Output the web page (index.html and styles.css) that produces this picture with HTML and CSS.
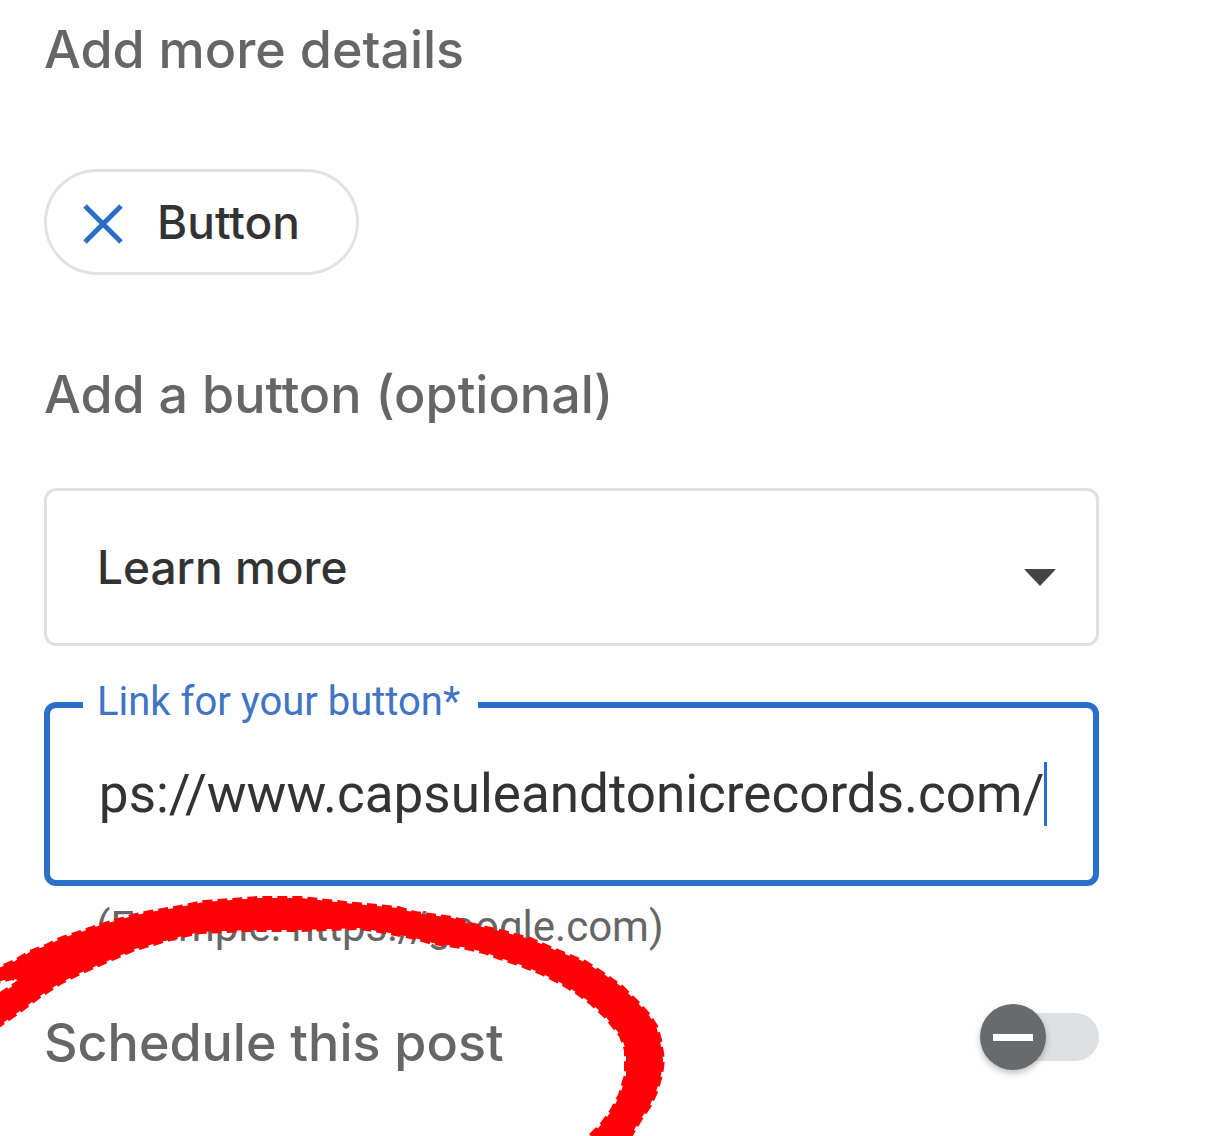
FILE: index.html
```html
<!DOCTYPE html>
<html lang="en">
<head>
    <meta charset="UTF-8">
    <meta name="viewport" content="width=device-width, initial-scale=1.0">
    <title>Add more details</title>
    <link rel="stylesheet" href="styles.css">
</head>
<body>
    <form class="post-form">
        <h2>Add more details</h2>
        <button type="button" class="chip">
            <svg class="chip-icon" viewBox="0 0 40 44" aria-hidden="true">
                <path d="M2 6L38 42M38 6L2 42"/>
            </svg>
            Button
        </button>

        <h2><label for="action">Add a button (optional)</label></h2>
        <div class="select-box">
            <select id="action">
                <option>Learn more</option>
            </select>
            <svg class="arrow" viewBox="0 0 32 17" aria-hidden="true">
                <path d="M0 0H32L16 17Z"/>
            </svg>
        </div>

        <fieldset class="link-field">
            <legend><label for="link">Link for your button*</label></legend>
            <div class="link-input">
                <input type="text" id="link" value="https://www.capsuleandtonicrecords.com/" required>
                <span class="caret"></span>
            </div>
        </fieldset>
        <p class="hint">(Example: https://google.com)</p>

        <div class="schedule">
            <h2><label for="schedule">Schedule this post</label></h2>
            <input type="checkbox" role="switch" id="schedule" class="switch">
            <svg class="marker" viewBox="0 895 670 241" aria-hidden="true">
                <path d="M-10 972L15 961L30 952L48 945L62 938L78 933L98 926L115 921L132 916L150 912L180 907L204 902L258 898L301 898L345 903L398 908L415 913L453 918L470 924L500 931L530 939L555 950L585 962L605 975L622 987L637 1002L648 1014L656 1026L660 1040L663 1060L661 1075L656 1092L650 1105L640 1120L628 1140L586 1140L602 1124L612 1110L620 1095L626 1075L626 1050L621 1036L606 1017L591 1003L576 992L561 983L541 973L521 965L500 958L484 952L462 947L433 943L411 937L385 932L360 928L300 930L250 930L200 932L170 939L150 945L135 949L110 960L80 973L60 983L40 996L20 1011L-10 1032L-10 1000L2 993L20 981L12 978L-10 984Z"/>
            </svg>
        </div>
    </form>

    <script>
        // keep the end of the address in view
        const link = document.getElementById('link');
        link.scrollLeft = link.scrollWidth;
    </script>
</body>
</html>
```
FILE: styles.css
```css
* {
    box-sizing: border-box;
}
body {
    margin: 0;
    background-color: #fefefe;
    font-family: Roboto, Arial, sans-serif;
    color: #333;
}
.post-form {
    padding: 20px 106px 0 44px;
    min-height: 100vh;
    overflow: hidden;
}
h2 {
    margin: 0;
    font-family: Inter, sans-serif;
    font-size: 52px;
    line-height: 60px;
    font-weight: 500;
    color: #666;
}
.chip {
    display: flex;
    align-items: center;
    gap: 34px;
    height: 106px;
    margin: 89px 0 90px;
    padding: 0 56px 0 36px;
    border: 3px solid #e2e2e2;
    border-radius: 53px;
    background: #fff;
    font-family: Inter, sans-serif;
    font-size: 46px;
    font-weight: 500;
    color: #333;
    cursor: pointer;
}
.chip-icon {
    width: 40px;
    height: 44px;
    fill: none;
    stroke: #2a6fc4;
    stroke-width: 5;
}
.select-box {
    position: relative;
    margin: 63px 0 36px;
}
.select-box select {
    display: block;
    width: 100%;
    height: 158px;
    padding: 0 100px 0 50px;
    border: 3px solid #e0e0e0;
    border-radius: 12px;
    background: #fff;
    appearance: none;
    font-family: Inter, sans-serif;
    font-size: 46px;
    font-weight: 500;
    color: #333;
}
.arrow {
    position: absolute;
    right: 43px;
    top: 81px;
    width: 32px;
    height: 17px;
    fill: #444;
    pointer-events: none;
}
.link-field {
    min-width: 0;
    margin: 0;
    padding: 0 46px 54px 33px;
    border: 6px solid #2a6fc9;
    border-radius: 12px;
}
.link-field legend {
    padding: 0 18px 6px 14px;
    font-size: 40px;
    line-height: 40px;
    color: #3f75c4;
}
.link-input {
    display: flex;
    align-items: center;
    padding: 34px 0 0 17px;
}
.link-input input {
    flex: 1;
    min-width: 0;
    height: 64px;
    padding: 0;
    border: 0;
    outline: 0;
    background: transparent;
    font-family: Roboto, Arial, sans-serif;
    font-size: 53px;
    color: #333;
}
.caret {
    width: 3px;
    height: 64px;
    background: #2a6fc9;
}
.hint {
    margin: 17px 0 0 52px;
    font-size: 42px;
    line-height: 48px;
    color: #666;
}
.schedule {
    position: relative;
    display: flex;
    align-items: flex-start;
    justify-content: space-between;
    margin-top: 62px;
}
.switch {
    appearance: none;
    display: flex;
    align-items: center;
    width: 119px;
    height: 48px;
    margin: 0;
    border-radius: 24px;
    background: linear-gradient(90deg, transparent 33px, #dfe0e2 33px);
    cursor: pointer;
}
.switch::before {
    content: "";
    width: 66px;
    height: 66px;
    border-radius: 50%;
    background: linear-gradient(#fff, #fff) center / 40px 7px no-repeat #686a6b;
    box-shadow: 0 3px 6px rgba(0,0,0,0.25);
}
.switch:checked::before {
    margin-left: auto;
    background-color: #2a6fc9;
}
.marker {
    position: absolute;
    left: -44px;
    top: -118px;
    width: 670px;
    height: 241px;
    pointer-events: none;
}
.marker path {
    fill: #fe0208;
    stroke: #fe0208;
    stroke-width: 4;
    stroke-dasharray: 10 5;
}
```
